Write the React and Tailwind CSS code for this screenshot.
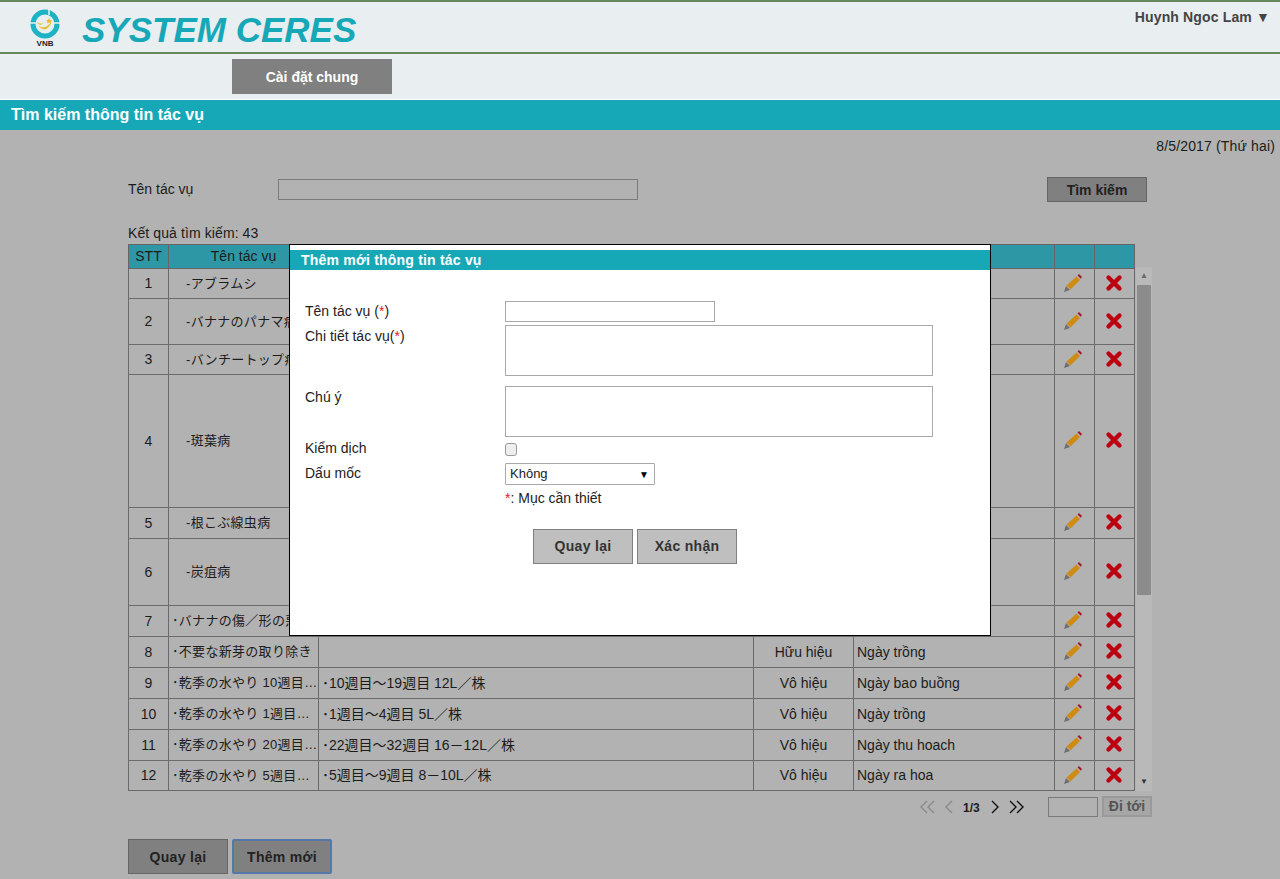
import React from "react";

const rows = [
  { no: 1, h: "h-[30px]", name: "-アブラムシ", indent: true },
  { no: 2, h: "h-[46px]", name: "-バナナのパナマ病", indent: true },
  { no: 3, h: "h-[30px]", name: "-バンチートップ病", indent: true },
  { no: 4, h: "h-[133px]", name: "-斑葉病", indent: true },
  { no: 5, h: "h-[31px]", name: "-根こぶ線虫病", indent: true },
  { no: 6, h: "h-[67px]", name: "-炭疽病", indent: true },
  { no: 7, h: "h-[31px]", name: "･バナナの傷／形の悪い果実" },
  { no: 8, h: "h-[31px]", name: "･不要な新芽の取り除き", status: "Hữu hiệu", date: "Ngày trồng" },
  { no: 9, h: "h-[31px]", name: "･乾季の水やり 10週目〜19週目", detail: "･10週目〜19週目 12L／株", status: "Vô hiệu", date: "Ngày bao buồng" },
  { no: 10, h: "h-[31px]", name: "･乾季の水やり 1週目〜4週目の水やり", detail: "･1週目〜4週目 5L／株", status: "Vô hiệu", date: "Ngày trồng" },
  { no: 11, h: "h-[31px]", name: "･乾季の水やり 20週目〜32週目", detail: "･22週目〜32週目 16－12L／株", status: "Vô hiệu", date: "Ngày thu hoach" },
  { no: 12, h: "h-[30px]", name: "･乾季の水やり 5週目〜9週目の水やり", detail: "･5週目〜9週目 8－10L／株", status: "Vô hiệu", date: "Ngày ra hoa" },
];

const PencilIcon = () => (
  <svg width="20" height="20" viewBox="0 0 20 20">
    <path d="M1 19 L3 13 L7 17 Z" fill="#6f6f6f" />
    <path d="M3.5 12.5 L13.5 3.5 L17 7 L7.5 16.5 Z" fill="#cf8c14" />
    <path d="M14.5 2.5 L16 1 L19 4 L17.8 5.8 Z" fill="#a8182c" />
  </svg>
);

const CrossIcon = () => (
  <svg width="18" height="18" viewBox="0 0 18 18">
    <path d="M3.5 3.5 L14.5 14.5 M14.5 3.5 L3.5 14.5" stroke="#bc0010" strokeWidth="4.4" strokeLinecap="round" />
  </svg>
);

const Chevron = ({ d, w = 10, color }) => (
  <svg width={w} height="14" viewBox={`0 0 ${w} 14`} fill="none" stroke={color} strokeWidth="1.4">
    <path d={d} />
  </svg>
);

const Logo = () => (
  <div className="flex w-[30px] flex-col items-center">
    <svg width="30" height="30" viewBox="0 0 30 30">
      <circle cx="15" cy="15" r="12" fill="none" stroke="#1cb3c4" strokeWidth="5" />
      <path d="M0 14 L7 14 M23 14 L30 14 M19 0 L19 6" stroke="#e9eef1" strokeWidth="1.5" />
      <path d="M8 16 C12 20 18 19 22 11 C20 20 13 24 8 16 Z" fill="#e6c028" />
      <path d="M7 13 C10 15 12 15 14 14 C11 17 8 16 7 13 Z" fill="#e6c028" />
      <path d="M19 9 L20 11 L22 11 L20.5 12.5 L21 14.5 L19 13.5 L17 14.5 L17.5 12.5 L16 11 L18 11 Z" fill="#e6c028" />
    </svg>
    <span className="text-[8px] leading-[10px] font-bold text-[#222]">VNB</span>
  </div>
);

const App = () => {
  return (
    <div className="relative h-[879px] w-[1280px] overflow-hidden bg-[#b2b2b2] text-[14px] text-[#1c1c1c] [font-family:'Liberation_Sans','Noto_Sans_CJK_JP',sans-serif]">
      {/* header */}
      <div className="flex h-[54px] justify-between border-y-2 border-[#66875c] bg-[#e9eef1]">
        <div className="flex items-start pl-[30px] pt-[7px]">
          <Logo />
          <div className="ml-[22px] text-[35px] leading-[42px] font-bold italic text-[#17a8b8]">SYSTEM CERES</div>
        </div>
        <div className="pr-[10px] pt-[5px] font-bold tracking-[0.15px] text-[#444]">Huynh Ngoc Lam ▼</div>
      </div>

      {/* nav */}
      <div className="h-[46px] border-b border-white bg-[#e9eef1] pl-[232px] pt-[5px]">
        <div className="flex h-[35px] w-[160px] items-center justify-center bg-[#808080] pt-px font-bold text-white">Cài đặt chung</div>
      </div>

      <div className="flex h-[30px] items-center bg-[#17a8b8] pl-[11px] text-[16px] font-bold text-white">Tìm kiếm thông tin tác vụ</div>

      <div className="pr-[5px] pt-[7px] text-right leading-[18px] tracking-[0.15px]">8/5/2017 (Thứ hai)</div>

      {/* search */}
      <div className="mt-[22px] flex h-[25px] items-center pl-[128px]">
        <div className="-mt-px w-[150px]">Tên tác vụ</div>
        <div className="-mt-px h-[21px] w-[360px] border border-[#7a7a7a]" />
        <div className="ml-[409px] flex h-[25px] w-[100px] items-center justify-center border border-[#666] bg-[#808080] pt-px font-bold text-[#222]">Tìm kiếm</div>
      </div>

      <div className="mt-[22px] pl-[128px] leading-[18px] tracking-[0.1px]">Kết quả tìm kiếm: 43</div>

      {/* table + scrollbar */}
      <div className="mt-[2px] flex items-start pl-[128px]">
        <table className="w-[1006px] table-fixed border-collapse">
          <colgroup>
            <col className="w-[40px]" />
            <col className="w-[150px]" />
            <col className="w-[435px]" />
            <col className="w-[100px]" />
            <col className="w-[201px]" />
            <col className="w-[40px]" />
            <col className="w-[40px]" />
          </colgroup>
          <thead>
            <tr className="h-[24px] bg-[#2e97a5]">
              <th className="border border-[#666] font-normal">STT</th>
              <th className="border border-[#666] font-normal">Tên tác vụ</th>
              <th className="border border-[#666] font-normal">Chi tiết tác vụ</th>
              <th className="border border-[#666] font-normal">Kiểm dịch</th>
              <th className="border border-[#666] font-normal">Dấu mốc</th>
              <th className="border border-[#666]" />
              <th className="border border-[#666]" />
            </tr>
          </thead>
          <tbody>
            {rows.map((row) => (
              <tr key={row.no} className={row.h}>
                <td className="border border-[#6b6b6b] text-center">{row.no}</td>
                <td className={`truncate border border-[#6b6b6b] text-[13px] tracking-[0.3px] ${row.indent ? "pl-[17px]" : "pl-[3px]"}`}>{row.name}</td>
                <td className="truncate border border-[#6b6b6b] pl-[3px]">{row.detail}</td>
                <td className="border border-[#6b6b6b] text-center">{row.status}</td>
                <td className="border border-[#6b6b6b] pl-[3px]">{row.date}</td>
                <td className="border border-[#6b6b6b]">
                  <div className="flex justify-center pb-[2px] pr-[4px]"><PencilIcon /></div>
                </td>
                <td className="border border-[#6b6b6b]">
                  <div className="flex justify-center pb-[2px] pr-[2px]"><CrossIcon /></div>
                </td>
              </tr>
            ))}
          </tbody>
        </table>
        <div className="ml-px mt-[23px] flex h-[524px] w-[16px] flex-col bg-[#b9b9b9]">
          <div className="flex h-[18px] items-center justify-center text-[8px] text-[#666]">▲</div>
          <div className="mx-px h-[310px] bg-[#8c8c8c]" />
          <div className="mt-auto flex h-[18px] items-center justify-center text-[8px] text-[#333]">▼</div>
        </div>
      </div>

      {/* pagination */}
      <div className="mt-[5px] flex h-[21px] items-center pl-[920px]">
        <Chevron w={15} color="#8a8a8a" d="M7 1 L1 7 L7 13 M14 1 L8 7 L14 13" />
        <div className="ml-[10px]"><Chevron w={8} color="#8a8a8a" d="M7 1 L1 7 L7 13" /></div>
        <div className="ml-[10px] w-[28px] pt-[2px] text-[12px] font-bold">1/3</div>
        <Chevron w={8} color="#111" d="M1 1 L7 7 L1 13" />
        <div className="ml-[10px]"><Chevron w={15} color="#111" d="M1 1 L7 7 L1 13 M8 1 L14 7 L8 13" /></div>
        <div className="ml-[24px] h-[20px] w-[50px] border border-[#7a7a7a]" />
        <div className="ml-[4px] flex h-[21px] w-[50px] items-center justify-center border-2 border-[#9a9a9a] bg-[#a6a6a6] font-bold text-[#555]">Đi tới</div>
      </div>

      {/* bottom buttons */}
      <div className="mt-[22px] flex gap-[4px] pl-[128px]">
        <div className="flex h-[35px] w-[100px] items-center justify-center border border-[#666] bg-[#808080] pt-px font-bold tracking-[0.3px] text-[#222]">Quay lại</div>
        <div className="flex h-[35px] w-[100px] items-center justify-center rounded-[2px] border-2 border-[#5578a8] bg-[#808080] pt-px font-bold tracking-[0.3px] text-[#222]">Thêm mới</div>
      </div>

      {/* modal */}
      <div className="absolute left-[289px] top-[244px] h-[392px] w-[702px] border border-black bg-white pt-[5px]">
        <div className="flex h-[20px] items-center bg-[#17a8b8] pl-[11px] pt-px font-bold tracking-[0.2px] text-white">Thêm mới thông tin tác vụ</div>
        <div className="grid grid-cols-[200px_428px] pl-[15px] pt-[31px] text-[#222]">
          <div className="leading-[20px]">Tên tác vụ (<span className="text-[#e02020]">*</span>)</div>
          <div className="h-[21px] w-[210px] border border-[#a9a9a9]" />
          <div className="mt-[5px] leading-[18px]">Chi tiết tác vụ(<span className="text-[#e02020]">*</span>)</div>
          <div className="mt-[3px] h-[51px] border border-[#a9a9a9]" />
          <div className="mt-[10px] pt-[1px] leading-[20px]">Chú ý</div>
          <div className="mt-[10px] h-[51px] border border-[#a9a9a9]" />
          <div className="mt-[1px] leading-[20px]">Kiểm dịch</div>
          <div className="mt-[6px] h-[13px] w-[12px] rounded-[3px] border border-[#9a9a9a] bg-[#eeeeee]" />
          <div className="mt-[5px] leading-[20px]">Dấu mốc</div>
          <div className="mt-[5px] flex h-[22px] w-[150px] items-center justify-between rounded-[1px] border border-[#a9a9a9] pl-[4px] pr-[5px] text-[13px]">
            <span>Không</span>
            <span className="text-[10px] text-black">▼</span>
          </div>
          <div />
          <div className="mt-[4px] leading-[18px]"><span className="text-[#e02020]">*</span>: Mục cần thiết</div>
        </div>
        <div className="mt-[22px] flex gap-[4px] pl-[243px]">
          <div className="flex h-[35px] w-[100px] items-center justify-center border border-[#808080] bg-[#bfbfbf] font-bold tracking-[0.3px] text-[#333]">Quay lại</div>
          <div className="flex h-[35px] w-[100px] items-center justify-center border border-[#808080] bg-[#bfbfbf] font-bold tracking-[0.3px] text-[#333]">Xác nhận</div>
        </div>
      </div>
    </div>
  );
};

export default App;
